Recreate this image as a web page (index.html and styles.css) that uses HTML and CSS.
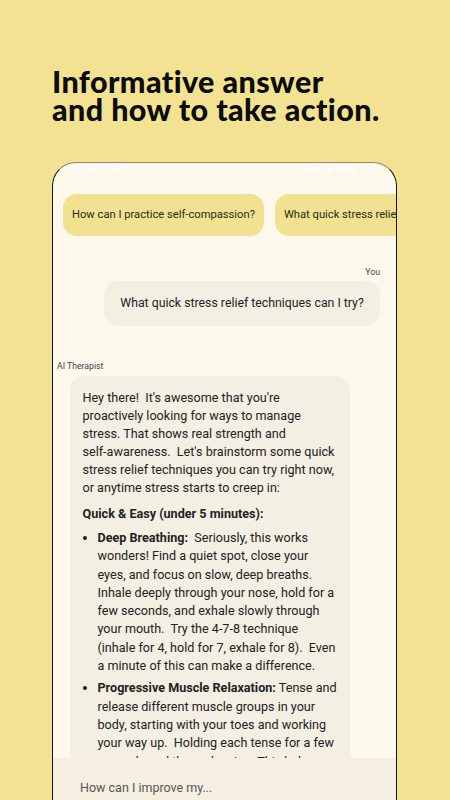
FILE: index.html
```html
<!DOCTYPE html>
<html>
<head>
<meta charset="utf-8">
<link rel="stylesheet" href="styles.css">
</head>
<body>
<div class="page">
  <h1 class="headline">Informative answer<br>and how to take action.</h1>
  <div class="phone">
    <div class="status">
      <span class="status-left">00:58 &nbsp;⛉ ✉ ◯</span>
      <span class="status-right">✎ ≋ ıll 58%</span>
    </div>
    <div class="chips">
      <div class="chip">How can I practice self-compassion?</div>
      <div class="chip">What quick stress relief techniques can I try?</div>
    </div>
    <div class="msg-user">
      <div class="label label-you">You</div>
      <div class="bubble-user">What quick stress relief techniques can I try?</div>
    </div>
    <div class="msg-ai">
      <div class="label label-ai">AI Therapist</div>
      <div class="bubble-ai">
        <p>Hey there!&nbsp; It's awesome that you're<br>proactively looking for ways to manage<br>stress. That shows real strength and<br>self-awareness.&nbsp; Let's brainstorm some quick<br>stress relief techniques you can try right now,<br>or anytime stress starts to creep in:</p>
        <p class="bold">Quick &amp; Easy (under 5 minutes):</p>
        <ul>
          <li><b>Deep Breathing:</b>&nbsp; Seriously, this works<br>wonders! Find a quiet spot, close your<br>eyes, and focus on slow, deep breaths.<br>Inhale deeply through your nose, hold for a<br>few seconds, and exhale slowly through<br>your mouth.&nbsp; Try the 4-7-8 technique<br>(inhale for 4, hold for 7, exhale for 8).&nbsp; Even<br>a minute of this can make a difference.</li>
          <li><b>Progressive Muscle Relaxation:</b> Tense and<br>release different muscle groups in your<br>body, starting with your toes and working<br>your way up.&nbsp; Holding each tense for a few<br>seconds and then releasing. This helps</li>
        </ul>
      </div>
    </div>
    <div class="input">How can I improve my...</div>
  </div>
</div>
</body>
</html>
```

FILE: styles.css
```css
html, body {
  margin: 0;
  padding: 0;
}
body {
  background: #f3e292;
  width: 450px;
  height: 800px;
  overflow: hidden;
}
.page {
  display: flex;
  flex-direction: column;
  height: 800px;
}
.headline {
  margin: 67px 0 0 52px;
  font-family: "Lato", sans-serif;
  font-weight: 900;
  font-size: 30.5px;
  line-height: 28px;
  letter-spacing: 0.4px;
  color: #0c0c0c;
}
.phone {
  position: relative;
  margin: 39px 0 0 52px;
  width: 343px;
  flex: 1;
  background: #fdf8ec;
  border: 1.5px solid #141414;
  border-bottom: none;
  border-top-color: #8f8a70;
  border-radius: 24px 24px 0 0;
  overflow: hidden;
  font-family: "Roboto", "Noto Sans", sans-serif;
  color: #222;
}
.status {
  display: flex;
  justify-content: space-between;
  height: 14px;
  padding: 0 40px 0 18px;
  font-size: 11px;
  line-height: 14px;
  color: #ffffff;
}
.chips {
  display: flex;
  gap: 11px;
  margin-top: 17px;
  padding-left: 10px;
  white-space: nowrap;
}
.chip {
  flex: none;
  background: #f2e190;
  border-radius: 14px;
  height: 42px;
  line-height: 42px;
  padding: 0 9px;
  font-size: 11.2px;
  color: #2a2a20;
}
.msg-user {
  display: flex;
  flex-direction: column;
  align-items: flex-end;
  padding-right: 16px;
  margin-top: 30px;
}
.label {
  font-size: 8.7px;
  color: #444;
  line-height: 12px;
}
.label-you {
  margin-bottom: 3px;
}
.bubble-user {
  background: #f4efe3;
  border-radius: 14px;
  width: 276px;
  height: 45px;
  line-height: 45px;
  text-align: center;
  font-size: 12.3px;
  color: #222;
}
.msg-ai {
  margin-top: 34px;
  padding-left: 4px;
}
.label-ai {
  margin-bottom: 4px;
}
.bubble-ai {
  margin-left: 12.5px;
  width: 254px;
  background: #f4efe3;
  border-radius: 14px;
  padding: 13px 13px 40px 13px;
  font-size: 12.6px;
  line-height: 18px;
  color: #222;
  white-space: nowrap;
}
.bubble-ai p {
  margin: 0;
}
.bubble-ai p.bold {
  font-weight: 700;
  margin-top: 8px;
}
.bubble-ai ul {
  margin: 6px 0 0 0;
  padding-left: 15px;
}
.bubble-ai li {
  margin-bottom: 4px;
  line-height: 18.3px;
}
.bubble-ai b {
  font-weight: 700;
}
.input {
  position: absolute;
  left: 0;
  right: 0;
  bottom: 0;
  height: 42px;
  background: #f5efe2;
  padding-left: 27px;
  line-height: 60px;
  font-size: 12.5px;
  color: #555;
}
```
